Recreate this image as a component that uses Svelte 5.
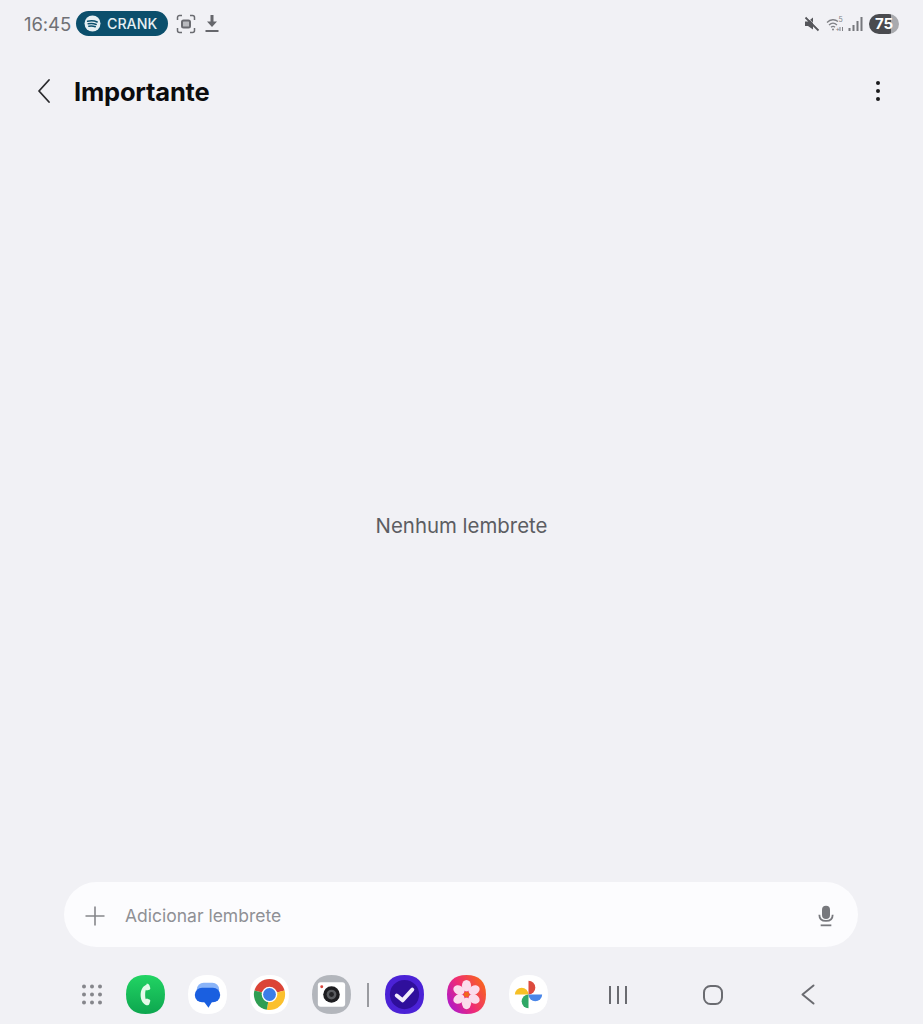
<script>
    const dots = Array.from({ length: 9 }, (_, i) => ({
        cx: 4 + (i % 3) * 8,
        cy: 3.5 + Math.floor(i / 3) * 8
    }));
    const petals = [0, 60, 120, 180, 240, 300];
    const squircle = "M20 0C33 0 40 7 40 20S33 40 20 40 0 33 0 20 7 0 20 0Z";
</script>

<div class="page">
    <div class="status">
        <div class="status-left">
            <span class="time">16:45</span>
            <div class="pill">
                <svg width="17" height="17" viewBox="0 0 17 17">
                    <circle cx="8.500" cy="8.500" r="8" fill="#e6f0f3" />
                    <path d="M3.600 6.200c3.200-.9 6.600-.7 9.600.8M4.200 8.800c2.700-.7 5.500-.5 8 .7M4.800 11.200c2.200-.5 4.400-.4 6.500.6" fill="none" stroke="#0b4f6c" stroke-width="1.500" stroke-linecap="round" />
                </svg>
                <span>CRANK</span>
            </div>
            <svg class="capture" width="20" height="20" viewBox="0 0 20 20" fill="none" stroke="#6a6b70" stroke-width="1.500">
                <path d="M1.500 6V3.500a2 2 0 0 1 2-2H6M14 1.500h2.500a2 2 0 0 1 2 2V6M18.500 14v2.500a2 2 0 0 1-2 2H14M6 18.500H3.500a2 2 0 0 1-2-2V14" />
                <rect x="6" y="6.500" width="8" height="7" rx="1.500" stroke-width="2" fill="#b9babe" />
            </svg>
            <svg width="14" height="19" viewBox="0 0 14 19">
                <path d="M5.500 1h3v6.500H12L7 13 2 7.500h3.500z" fill="#66676c" />
                <rect x="0.500" y="16" width="13" height="2" fill="#66676c" />
            </svg>
        </div>
        <div class="status-right">
            <svg class="mute" width="16" height="16" viewBox="0 0 16 16">
                <path d="M1 5.500h3L9 1.500v12l-5-3.500H1z" fill="#55565b" />
                <path d="M1.500 1.500l13 13" stroke="#55565b" stroke-width="1.800" />
                <path d="M1.500 1.500l13 13" stroke="#f1f1f5" stroke-width="0.700" transform="translate(1.200 -1)" />
            </svg>
            <svg class="wifi" width="18" height="16" viewBox="0 0 18 16" fill="none" stroke="#808186" stroke-width="1.300">
                <path d="M1 6.500c3.500-3.500 8-3.500 11-1M3 9c2.500-2.300 5.500-2.300 8 0M5 11.300c1.400-1.200 2.800-1.200 4 0" />
                <circle cx="7" cy="13.500" r="1" fill="#808186" stroke="none" />
                <text x="12.500" y="6" class="net">5</text>
                <text x="9.500" y="15" class="net">+</text>
                <path d="M14 15v-4M16.500 11v4" stroke-width="1" />
            </svg>
            <svg class="signal" width="15" height="14" viewBox="0 0 15 14" fill="#77787d">
                <rect x="0.500" y="11" width="2" height="3" />
                <rect x="4.500" y="8" width="2" height="6" />
                <rect x="8.500" y="4" width="2" height="10" />
                <rect x="12.500" y="0" width="2" height="14" />
            </svg>
            <div class="battery"><span>75</span></div>
        </div>
    </div>

    <header class="appbar">
        <button type="button" class="back" aria-label="Voltar">
            <svg width="16" height="26" viewBox="0 0 16 26" fill="none" stroke="#2a2a2d" stroke-width="1.800" stroke-linecap="round" stroke-linejoin="round">
                <path d="M13 2L3 13l10 11" />
            </svg>
        </button>
        <h1>Importante</h1>
        <button type="button" class="more" aria-label="Mais opções">
            <i></i><i></i><i></i>
        </button>
    </header>

    <main class="empty">Nenhum lembrete</main>

    <div class="composer">
        <svg width="20" height="20" viewBox="0 0 20 20" stroke="#85868b" stroke-width="1.600">
            <path d="M10 0.500v19M0.500 10h19" />
        </svg>
        <span class="placeholder">Adicionar lembrete</span>
        <svg width="16" height="22" viewBox="0 0 18 24">
            <rect x="4.500" y="0.500" width="9" height="15" rx="4.500" fill="#77787d" />
            <path d="M1.500 10.500c0 4.500 3 7 7.500 7s7.500-2.500 7.500-7" fill="none" stroke="#77787d" stroke-width="2" />
            <rect x="3" y="21.500" width="12" height="2" fill="#77787d" />
        </svg>
    </div>

    <nav class="dock">
        <div class="apps">
            <svg class="grid" width="23" height="23" viewBox="0 0 23 23" fill="#85868b">
                {#each dots as d}
                    <circle cx={d.cx} cy={d.cy} r="2" />
                {/each}
            </svg>

            <svg width="39" height="39" viewBox="0 0 40 40">
                <defs>
                    <linearGradient id="phoneBg" x1="0" y1="0" x2="0" y2="1">
                        <stop offset="0" stop-color="#22d463" />
                        <stop offset="1" stop-color="#0da64f" />
                    </linearGradient>
                </defs>
                <path d={squircle} fill="url(#phoneBg)" />
                <path d="M21 10c-3 1-6 4.500-6 10.500s3 9.500 6 10.500c1.500.4 2.500-.3 3-1.500l.8-2.500c.3-1 0-1.700-.8-2l-2-.7c-.8-.2-1.200 0-1.600.6-1-2-1-7.800 0-9.800.4.600.8.800 1.600.6l2-.7c.8-.3 1.100-1 .8-2l-.8-2.500c-.5-1.200-1.500-1.900-3-1.500z" fill="#e3fbe9" />
            </svg>

            <svg width="39" height="39" viewBox="0 0 40 40">
                <path d={squircle} fill="#fff" />
                <rect x="9" y="8" width="23" height="14" rx="7" fill="#8ab4f8" />
                <rect x="7" y="13" width="26" height="15" rx="7.500" fill="#1a5fe0" />
                <path d="M16 27l5 6.500L25 27z" fill="#1a5fe0" />
            </svg>

            <svg width="39" height="39" viewBox="0 0 40 40">
                <path d={squircle} fill="#fff" />
                <path d="M20 20L4.550 15.860A16 16 0 0 1 35.450 15.860Z" fill="#db4437" />
                <path d="M20 20L35.450 15.860A16 16 0 0 1 17.200 35.760Z" fill="#fbc02d" />
                <path d="M20 20L17.200 35.760A16 16 0 0 1 4.550 15.860Z" fill="#2f9e52" />
                <circle cx="20" cy="20" r="8" fill="#fff" />
                <circle cx="20" cy="20" r="6.600" fill="#3b7de8" />
            </svg>

            <svg width="39" height="39" viewBox="0 0 40 40">
                <path d={squircle} fill="#b3b6bc" />
                <rect x="6" y="7.500" width="28" height="25" rx="3" fill="#fff" />
                <circle cx="10" cy="12" r="1.500" fill="#d8453c" />
                <circle cx="20" cy="20" r="8.500" fill="#1d1d20" />
                <circle cx="20" cy="20" r="5" fill="#5a5c60" />
                <circle cx="20" cy="20" r="2.500" fill="#232326" />
            </svg>

            <span class="divider"></span>

            <svg width="39" height="39" viewBox="0 0 40 40">
                <path d={squircle} fill="#4b22d6" />
                <circle cx="20" cy="20" r="15" fill="#2f0f9c" />
                <path d="M12 21l6 5 10-11" fill="none" stroke="#f1edfb" stroke-width="4" stroke-linecap="round" stroke-linejoin="round" />
            </svg>

            <svg width="39" height="39" viewBox="0 0 40 40">
                <defs>
                    <linearGradient id="galleryBg" x1="0" y1="0.900" x2="1" y2="0.300">
                        <stop offset="0" stop-color="#a416d8" />
                        <stop offset="0.500" stop-color="#ee2a78" />
                        <stop offset="1" stop-color="#f8631f" />
                    </linearGradient>
                </defs>
                <path d={squircle} fill="url(#galleryBg)" />
                {#each petals as a}
                    <ellipse cx="20" cy="11" rx="4.700" ry="6" fill="#fbdcec" transform="rotate({a} 20 20)" />
                {/each}
                <circle cx="20" cy="20" r="2.800" fill="#f2651f" />
            </svg>

            <svg width="39" height="39" viewBox="0 0 40 40">
                <path d={squircle} fill="#fff" />
                <path d="M6 20A7 7 0 0 1 20 20Z" fill="#f6c026" />
                <path d="M20 6A7 7 0 0 1 20 20Z" fill="#dc4a3d" />
                <path d="M34 20A7 7 0 0 1 20 20Z" fill="#4a86e8" />
                <path d="M20 34A7 7 0 0 1 20 20Z" fill="#2fa866" />
            </svg>
        </div>

        <div class="nav-buttons">
            <svg width="20" height="20" viewBox="0 0 20 20" stroke="#6a6b70" stroke-width="2">
                <path d="M2 1v18M10 1v18M18 1v18" />
            </svg>
            <svg width="20" height="20" viewBox="0 0 20 20" fill="none" stroke="#6a6b70" stroke-width="2">
                <rect x="1" y="1" width="18" height="18" rx="6.500" />
            </svg>
            <svg class="nav-back" width="14" height="21" viewBox="0 0 14 21" fill="none" stroke="#6a6b70" stroke-width="2" stroke-linecap="round" stroke-linejoin="round">
                <path d="M12.500 1.500L1.500 10.500l11 9" />
            </svg>
        </div>
    </nav>
</div>

<style>
    :global(body) {
        background: #f1f1f5;
    }

    .page {
        height: 1024px;
        display: flex;
        flex-direction: column;
        background: #f1f1f5;
        font-family: Inter, "Noto Sans", sans-serif;
        overflow: hidden;
    }

    .status {
        height: 47px;
        box-sizing: border-box;
        padding: 0 24px;
        display: flex;
        align-items: center;
        justify-content: space-between;
    }

    .status-left,
    .status-right {
        display: flex;
        align-items: center;
    }

    .time {
        font-size: 18.500px;
        color: #6f7075;
        width: 52px;
        letter-spacing: -0.1px;
    }

    .pill {
        width: 92px;
        height: 25px;
        box-sizing: border-box;
        padding-left: 8px;
        border-radius: 13px;
        background: #0b4f6c;
        color: #e6f0f3;
        display: flex;
        align-items: center;
        gap: 6px;
        font-size: 14.200px;
        font-weight: 500;
    }

    .capture {
        margin: 0 9px 0 8px;
    }

    .wifi {
        margin: 0 4px 0 6px;
    }

    .signal {
        margin-right: 6px;
    }

    .net {
        font-size: 7px;
        fill: #808186;
        stroke: none;
        font-family: Inter, sans-serif;
    }

    .battery {
        width: 30px;
        height: 20px;
        border-radius: 10px;
        background: linear-gradient(to right, #4a4b4f 75%, #a9aaae 75%);
        color: #fff;
        font-size: 15px;
        font-weight: 700;
        display: flex;
        align-items: center;
        justify-content: center;
    }

    .appbar {
        height: 88px;
        box-sizing: border-box;
        padding: 0 39px 0 36px;
        display: flex;
        align-items: center;
    }

    .appbar button {
        border: none;
        background: none;
        padding: 0;
    }

    .back {
        width: 38px;
        height: 26px;
    }

    .back svg {
        display: block;
    }

    h1 {
        margin: 0;
        flex: 1;
        font-size: 25.500px;
        font-weight: 700;
        color: #0c0c0e;
        letter-spacing: -0.2px;
    }

    .more {
        display: flex;
        flex-direction: column;
        gap: 4px;
        width: 12px;
        align-items: center;
    }

    .more i {
        width: 4px;
        height: 4px;
        border-radius: 50%;
        background: #1a1a1c;
    }

    .empty {
        flex: 1;
        display: flex;
        align-items: center;
        justify-content: center;
        padding-top: 34px;
        font-size: 20.400px;
        color: #5c5d62;
    }

    .composer {
        margin: 0 65px 0 64px;
        height: 65px;
        box-sizing: border-box;
        padding: 2px 24px 0 21px;
        border-radius: 33px;
        background: #fcfcfe;
        display: flex;
        align-items: center;
    }

    .placeholder {
        flex: 1;
        margin-left: 20px;
        font-size: 17.500px;
        color: #8f9095;
    }

    .dock {
        height: 77px;
        box-sizing: border-box;
        padding: 28px 108px 10px 80px;
        display: flex;
        align-items: center;
        justify-content: space-between;
    }

    .apps {
        display: flex;
        align-items: center;
        gap: 23px;
    }

    .apps svg {
        display: block;
    }

    .divider {
        width: 2px;
        height: 24px;
        margin: 0 -7px;
        background: #9a9ba0;
    }

    .nav-buttons {
        display: flex;
        align-items: center;
        gap: 75px;
    }

    .nav-back {
        margin-left: 3px;
    }
</style>
